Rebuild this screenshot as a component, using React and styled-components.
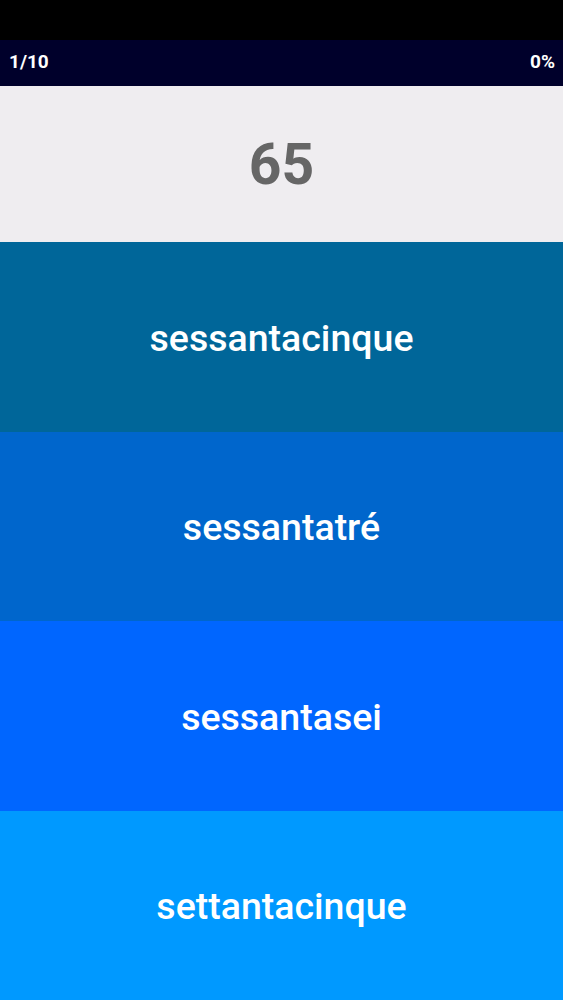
import React from "react";
import styled, { createGlobalStyle } from "styled-components";

const Global = createGlobalStyle`
  html, body { margin: 0; padding: 0; background: #000; }
  body { font-family: Roboto, "Noto Sans", sans-serif; }
  * { box-sizing: border-box; }
`;

const Screen = styled.div`
  width: 563px;
  height: 1000px;
  display: flex;
  flex-direction: column;
  background: #000;
`;

const StatusBar = styled.div`
  height: 40px;
  background: #000;
  flex: none;
`;

const TopBar = styled.div`
  height: 46px;
  flex: none;
  background: #00002b;
  color: #fff;
  display: flex;
  align-items: center;
  justify-content: space-between;
  padding: 0 8px 4px 9px;
  font-size: 19px;
  font-weight: 700;
`;

const Question = styled.div`
  height: 156px;
  flex: none;
  background: #efedf0;
  color: #666666;
  display: flex;
  align-items: center;
  justify-content: center;
  font-size: 57px;
  font-weight: 700;
`;

const Answer = styled.button`
  flex: 1;
  border: none;
  margin: 0;
  background: ${(p) => p.$bg};
  color: #fff;
  font-family: Roboto, "Noto Sans", sans-serif;
  font-size: 37.5px;
  font-weight: 500;
  display: flex;
  align-items: center;
  justify-content: center;
  padding: 2px 0 0;
  cursor: pointer;
`;

const answers = [
  { text: "sessantacinque", bg: "#006699" },
  { text: "sessantatré", bg: "#0066cc" },
  { text: "sessantasei", bg: "#0066ff" },
  { text: "settantacinque", bg: "#0099ff" },
];

export default function App() {
  return (
    <>
      <Global />
      <Screen>
        <StatusBar />
        <TopBar>
          <span>1/10</span>
          <span>0%</span>
        </TopBar>
        <Question>65</Question>
        {answers.map((a) => (
          <Answer key={a.text} $bg={a.bg}>
            {a.text}
          </Answer>
        ))}
      </Screen>
    </>
  );
}
